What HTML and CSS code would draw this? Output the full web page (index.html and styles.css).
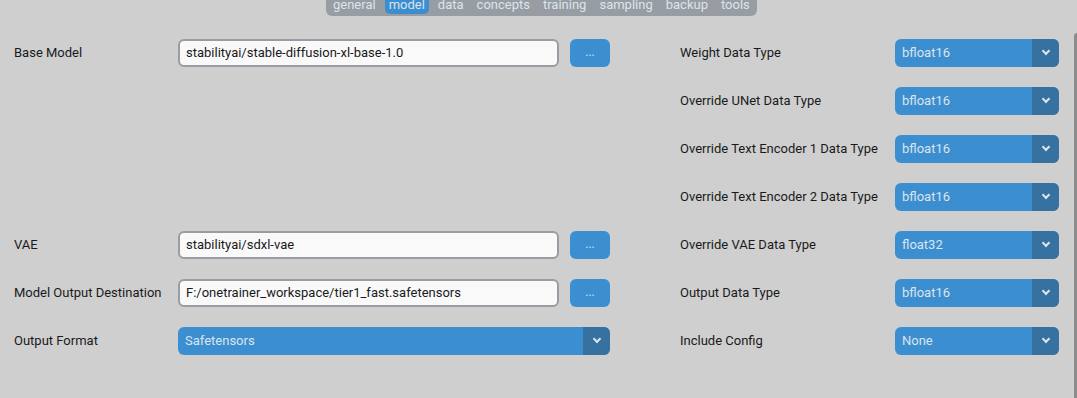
FILE: index.html
```html
<!DOCTYPE html>
<html lang="en">
<head>
    <meta charset="UTF-8">
    <title>OneTrainer - model</title>
    <link rel="stylesheet" href="styles.css">
</head>
<body>
    <div class="ventana">
        <div class="contenido">
            <!-- Barra de pestañas -->
            <div class="cabecera">
                <div class="pestanas">
                    <span class="pestana">general</span>
                    <span class="pestana activa">model</span>
                    <span class="pestana">data</span>
                    <span class="pestana">concepts</span>
                    <span class="pestana">training</span>
                    <span class="pestana">sampling</span>
                    <span class="pestana">backup</span>
                    <span class="pestana">tools</span>
                </div>
            </div>

            <!-- Rejilla de opciones del modelo -->
            <div class="rejilla">
                <div class="etiqueta">Base Model</div>
                <div class="campo">
                    <div class="entrada">stabilityai/stable-diffusion-xl-base-1.0</div>
                    <button class="boton">...</button>
                </div>
                <div></div>
                <div class="etiqueta">Weight Data Type</div>
                <div class="combo"><span class="valor">bfloat16</span><span class="flecha"></span></div>

                <div></div><div></div><div></div>
                <div class="etiqueta">Override UNet Data Type</div>
                <div class="combo"><span class="valor">bfloat16</span><span class="flecha"></span></div>

                <div></div><div></div><div></div>
                <div class="etiqueta">Override Text Encoder 1 Data Type</div>
                <div class="combo"><span class="valor">bfloat16</span><span class="flecha"></span></div>

                <div></div><div></div><div></div>
                <div class="etiqueta">Override Text Encoder 2 Data Type</div>
                <div class="combo"><span class="valor">bfloat16</span><span class="flecha"></span></div>

                <div class="etiqueta">VAE</div>
                <div class="campo">
                    <div class="entrada">stabilityai/sdxl-vae</div>
                    <button class="boton">...</button>
                </div>
                <div></div>
                <div class="etiqueta">Override VAE Data Type</div>
                <div class="combo"><span class="valor">float32</span><span class="flecha"></span></div>

                <div class="etiqueta">Model Output Destination</div>
                <div class="campo">
                    <div class="entrada">F:/onetrainer_workspace/tier1_fast.safetensors</div>
                    <button class="boton">...</button>
                </div>
                <div></div>
                <div class="etiqueta">Output Data Type</div>
                <div class="combo"><span class="valor">bfloat16</span><span class="flecha"></span></div>

                <div class="etiqueta">Output Format</div>
                <div class="combo"><span class="valor">Safetensors</span><span class="flecha"></span></div>
                <div></div>
                <div class="etiqueta">Include Config</div>
                <div class="combo"><span class="valor">None</span><span class="flecha"></span></div>
            </div>
        </div>
        <div class="barra"></div>
    </div>
</body>
</html>
```

FILE: styles.css
```css
body {
    margin: 0;
    background-color: #cfcfcf;
    font-family: Roboto, "Liberation Sans", sans-serif;
    font-size: 13px;
    color: #1a1a1a;
    overflow: hidden;
}

.ventana {
    display: flex;
    width: 1077px;
    height: 398px;
}

.contenido {
    width: 1074px;
}

.barra {
    width: 3px;
    margin-top: 33px;
    background-color: #8c8c8c;
    border-radius: 3px 0 0 0;
}

.cabecera {
    height: 16px;
    padding-left: 326px;
    display: flex;
}

.pestanas {
    display: flex;
    align-items: center;
    gap: 5px;
    height: 22px;
    margin-top: -6px;
    padding: 0 3px;
    background-color: #979da2;
    border-radius: 6px;
}

.pestana {
    color: #dce4ee;
    padding: 0 4px;
    height: 20px;
    line-height: 21px;
    margin-bottom: 2px;
}

.pestana.activa {
    background-color: #3b8ed0;
    border-radius: 0 0 5px 5px;
}

.rejilla {
    display: grid;
    grid-template-columns: 164px 432px 70px 215px 164px;
    grid-auto-rows: 48px;
    align-items: center;
    padding: 13px 0 0 14px;
}

.etiqueta {
    line-height: 16px;
}

.campo {
    display: flex;
    gap: 11px;
}

.entrada {
    flex: 1;
    height: 24px;
    line-height: 24px;
    padding: 0 6px;
    background-color: #f9f9fa;
    border: 2px solid #979da2;
    border-radius: 6px;
    white-space: nowrap;
    overflow: hidden;
}

.boton {
    width: 40px;
    height: 28px;
    padding: 0 0 2px;
    border: none;
    border-radius: 6px;
    background-color: #3b8ed0;
    color: #dce4ee;
    font-family: Roboto, "Liberation Sans", sans-serif;
    font-size: 12px;
}

.combo {
    display: flex;
    height: 28px;
    background-color: #3b8ed0;
    border-radius: 6px;
    overflow: hidden;
}

.valor {
    flex: 1;
    padding-left: 7px;
    line-height: 28px;
    color: #dce4ee;
}

.flecha {
    width: 27px;
    background-color: #36719f;
    display: flex;
    align-items: center;
    justify-content: center;
}

.flecha::after {
    content: "";
    width: 4px;
    height: 4px;
    border-right: 2px solid #dce4ee;
    border-bottom: 2px solid #dce4ee;
    transform: translateY(-2px) rotate(45deg);
}
```
